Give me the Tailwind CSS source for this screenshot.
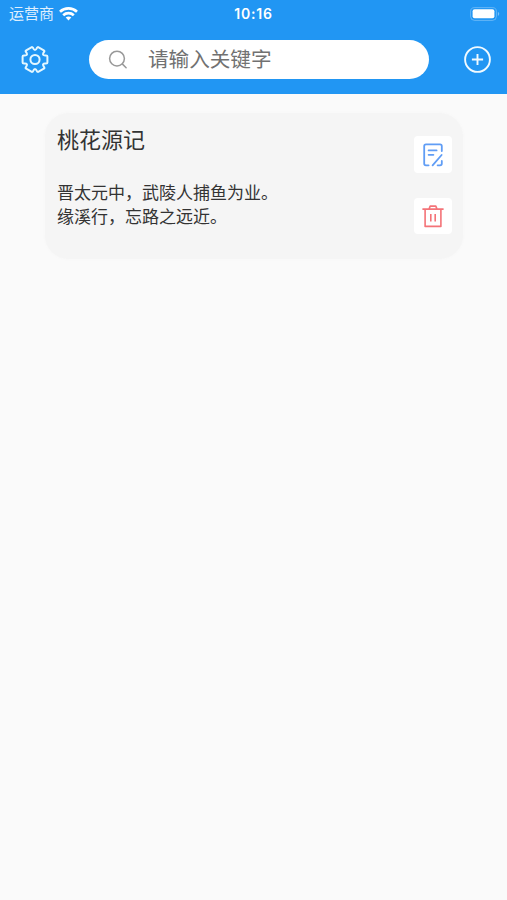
<!DOCTYPE html>
<html lang="zh-CN">
<head>
  <meta charset="UTF-8" />
  <meta name="viewport" content="width=device-width, initial-scale=1" />
  <title>桃花源记</title>
  <script src="https://cdn.jsdelivr.net/npm/@tailwindcss/browser@4"></script>
</head>
<body class="h-screen overflow-hidden bg-[#fafafa] font-['Inter','Noto_Sans_CJK_SC',sans-serif]">

  <!-- Header -->
  <header class="h-[94px] bg-[#2196f3] text-white">
    <!-- Status bar -->
    <div class="grid h-[27px] grid-cols-3 items-center pl-[9px] pr-[7px]">
      <div class="flex items-center gap-[5px]">
        <span class="text-[15px] leading-[27px] text-white/85">运营商</span>
        <svg class="h-[14px] w-[19px]" viewBox="0 0 19 14" fill="none" stroke="currentColor" stroke-width="2.7">
          <path d="M1 4.7C5.8.3 13.2.3 18 4.7" />
          <path d="M4.2 8.3c3-2.8 7.6-2.8 10.6 0" />
          <path d="M9.5 13.4 6.7 10.5c1.6-1.4 4-1.4 5.6 0z" fill="currentColor" stroke="none" />
        </svg>
      </div>
      <span class="-ml-[2px] text-center text-[14px] font-semibold leading-[27px] tracking-[0.8px]">10:16</span>
      <svg class="h-[14px] w-[30px] justify-self-end" viewBox="0 0 30 14" fill="none">
        <rect x=".6" y=".6" width="25.8" height="12.8" rx="4" stroke="white" stroke-opacity=".3" />
        <rect x="2.6" y="2.2" width="21.8" height="9" rx="2" fill="white" />
        <path d="M27.9 4.7v4.2c1.8-.8 1.8-3.4 0-4.2z" fill="white" fill-opacity=".4" />
      </svg>
    </div>

    <!-- Toolbar -->
    <div class="flex h-[65px] items-center pl-[21px] pr-4">
      <button class="shrink-0">
        <svg class="size-7" viewBox="-14 -13.5 28 28" fill="none" stroke="#e3f7ff" stroke-width="2" stroke-linejoin="round">
          <path d="M12.4-3V3Q12.4 4.1 11.1 4.1Q6.2 3.6 9.1 7.56Q9.75 8.69 8.8 9.24L3.6 12.24Q2.65 12.79 2 11.66Q0 7.2-2 11.66Q-2.65 12.79-3.6 12.24L-8.8 9.24Q-9.75 8.69-9.1 7.56Q-6.2 3.6-11.1 4.1Q-12.4 4.1-12.4 3V-3Q-12.4-4.1-11.1-4.1Q-6.2-3.6-9.1-7.56Q-9.75-8.69-8.8-9.24L-3.6-12.24Q-2.65-12.79-2-11.66Q0-7.2 2-11.66Q2.65-12.79 3.6-12.24L8.8-9.24Q9.75-8.69 9.1-7.56Q6.2-3.6 11.1-4.1Q12.4-4.1 12.4-3Z" />
          <circle r="4.6" />
        </svg>
      </button>
      <div class="ml-10 flex h-[39px] w-[340px] items-center rounded-full bg-white pl-[19px]">
        <svg class="size-5" viewBox="0 0 20 20" fill="none" stroke="#999" stroke-width="1.5" stroke-linecap="round">
          <circle cx="9" cy="8.6" r="7.4" />
          <path d="m14.5 14.1 3.6 3.6" />
        </svg>
        <span class="ml-[20px] text-[20.6px] leading-[36px] text-[#717171]">请输入关键字</span>
      </div>
      <button class="ml-auto shrink-0">
        <svg class="size-7" viewBox="0 0 28 28" fill="none" stroke="#f0faff" stroke-width="1.9">
          <circle cx="14.5" cy="13.5" r="12.4" />
          <path d="M14.5 7.9v11.2M8.9 13.5h11.2" />
        </svg>
      </button>
    </div>
  </header>

  <!-- Note card -->
  <main class="px-[45px] pt-[19px]">
    <article class="flex h-[146px] w-[418px] justify-between rounded-3xl bg-[#f5f5f5] pl-3 pr-[11px] shadow-[0_0_3px_#f5f5f5]">
      <div class="pt-[11px] text-[#333]">
        <h2 class="text-[22px] leading-8">桃花源记</h2>
        <p class="mt-[25px] text-[17px] leading-6">晋太元中，武陵人捕鱼为业。<br />缘溪行，忘路之远近。</p>
      </div>
      <div class="flex flex-col gap-[25px] pt-[23px]">
        <button class="grid h-[37px] w-[38px] place-items-center rounded bg-white">
          <svg class="h-6 w-5" viewBox="0 0 20 24" fill="none" stroke="#609df5" stroke-width="1.8" stroke-linecap="round">
            <path d="M5.6 22.3H3Q1.2 22.3 1.2 20.5V3.2Q1.2 1.4 3 1.4H17Q18.8 1.4 18.8 3.2V8" />
            <path d="M5.6 7.4h8M5.6 11.8h4.8M18.6 12 9.6 22.4M14.6 22.3H17Q18.8 22.3 18.8 20.5V18" />
          </svg>
        </button>
        <button class="grid h-[36px] w-[38px] place-items-center rounded bg-white">
          <svg class="h-6 w-[22px]" viewBox="0 0 22 24" fill="none" stroke="#f47378" stroke-width="1.6" stroke-linejoin="round">
            <path d="M.4 5.1h21.2M3.1 5.1v17.3h15.8V5.1M7 5.1l1.2-3h5.6l1.2 3" />
            <path d="M8.8 10v7.6M13.2 10v7.6" />
          </svg>
        </button>
      </div>
    </article>
  </main>

</body>
</html>
